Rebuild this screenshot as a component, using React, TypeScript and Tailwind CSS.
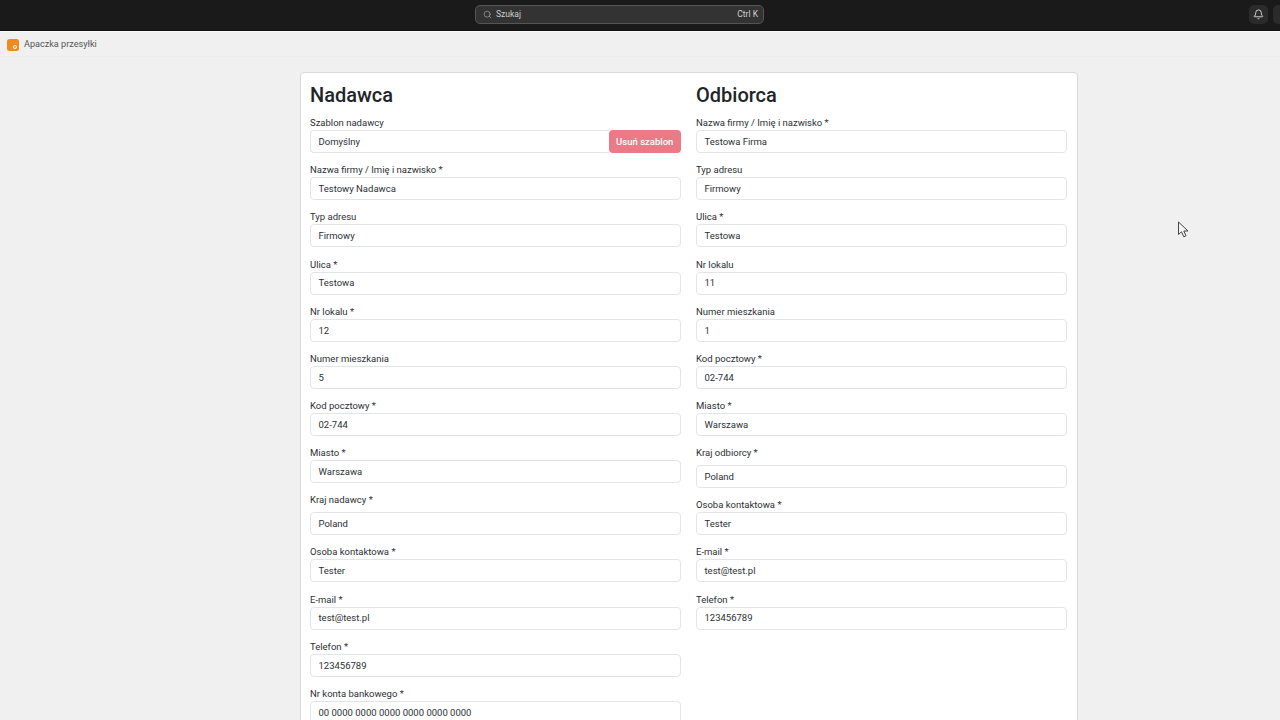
import React from "react";
import { Search, Bell } from "lucide-react";

type F = { label: string; value: string; tall?: boolean };

const left: F[] = [
  { label: "Nazwa firmy / Imię i nazwisko *", value: "Testowy Nadawca" },
  { label: "Typ adresu", value: "Firmowy" },
  { label: "Ulica *", value: "Testowa" },
  { label: "Nr lokalu *", value: "12" },
  { label: "Numer mieszkania", value: "5" },
  { label: "Kod pocztowy *", value: "02-744" },
  { label: "Miasto *", value: "Warszawa" },
  { label: "Kraj nadawcy *", value: "Poland", tall: true },
  { label: "Osoba kontaktowa *", value: "Tester" },
  { label: "E-mail *", value: "test@test.pl" },
  { label: "Telefon *", value: "123456789" },
  { label: "Nr konta bankowego *", value: "00 0000 0000 0000 0000 0000 0000" },
];

const right: F[] = [
  { label: "Nazwa firmy / Imię i nazwisko *", value: "Testowa Firma" },
  { label: "Typ adresu", value: "Firmowy" },
  { label: "Ulica *", value: "Testowa" },
  { label: "Nr lokalu", value: "11" },
  { label: "Numer mieszkania", value: "1" },
  { label: "Kod pocztowy *", value: "02-744" },
  { label: "Miasto *", value: "Warszawa" },
  { label: "Kraj odbiorcy *", value: "Poland", tall: true },
  { label: "Osoba kontaktowa *", value: "Tester" },
  { label: "E-mail *", value: "test@test.pl" },
  { label: "Telefon *", value: "123456789" },
];

function Box({ value, className = "" }: { value: string; className?: string }) {
  return (
    <div className={`h-[23px] flex items-center px-[7.5px] pt-[1px] bg-white border border-[#e2e5e8] rounded-[4px] text-[#2b3035] ${className}`}>
      {value}
    </div>
  );
}

function Field({ label, value, tall }: F) {
  return (
    <div className="mb-[8.17px]">
      <div className={`h-[16px] leading-[18px] text-[#2b3035] ${tall ? "mb-[5px]" : ""}`}>{label}</div>
      <Box value={value} />
    </div>
  );
}

function Column({ title, children }: { title: string; children: React.ReactNode }) {
  return (
    <div className="flex-1 min-w-0">
      <h2 className="text-[20px] leading-[25px] font-medium text-[#212529] mb-[7.05px] pt-[1px] h-[25px]">{title}</h2>
      {children}
    </div>
  );
}

export default function App() {
  return (
    <div className="relative h-[720px] w-[1280px] overflow-hidden bg-[#f0f0f0] text-[9.5px] font-['Roboto','Open_Sans',sans-serif]">
      <header className="h-[31px] bg-[#1a1a1a] border-b border-[#111] flex items-center relative">
        <div className="ml-[475px] w-[289px] h-[19px] rounded-[5px] bg-[#333333] border border-[#555555] flex items-center pl-[7px] pr-[5px] text-[#cfcfcf] text-[8.5px] mt-[-1px]">
          <Search size={9} strokeWidth={1.75} className="text-[#aaaaaa]" />
          <span className="ml-[4px]">Szukaj</span>
          <span className="ml-auto">Ctrl K</span>
        </div>
        <div className="absolute left-[1249px] top-[5px] w-[19px] h-[19px] rounded-[5px] bg-[#2b2b2b] flex items-center justify-center">
          <Bell size={11} strokeWidth={2} className="text-[#dddddd]" />
        </div>
        <div className="absolute left-[1273px] top-[5px] w-[19px] h-[19px] rounded-[5px] bg-[#2b2b2b]" />
      </header>
      <div className="h-[26px] flex items-center pl-[7px] border-t border-b border-t-[#fafafa] border-b-[#ececec] bg-[#f0f0f0]">
        <div className="w-[12px] h-[12px] mt-[1px] rounded-[2.5px] bg-[#f08c1e] flex items-end justify-end pr-[2px] pb-[2px]">
          <div className="w-[4px] h-[4px] rounded-full border border-white" />
        </div>
        <span className="ml-[5px] mt-[1px] text-[9.1px] text-[#555555]">Apaczka przesyłki</span>
      </div>
      <main className="w-[778px] ml-[300px] mt-[15px] bg-white border border-[#d9d9d9] rounded-[4px] pl-[9px] pr-[10px] pt-[9px] flex gap-[15px]">
        <Column title="Nadawca">
          <div className="mb-[8.17px]">
            <div className="h-[16px] leading-[18px] text-[#2b3035]">Szablon nadawcy</div>
            <div className="flex">
              <Box value="Domyślny" className="flex-1 rounded-r-none border-r-0" />
              <div className="h-[23px] w-[72.5px] pt-[1px] flex items-center justify-center rounded-[4px] bg-[#ea7a86] text-white font-medium">
                Usuń szablon
              </div>
            </div>
          </div>
          {left.map((f) => (
            <Field key={f.label} {...f} />
          ))}
        </Column>
        <Column title="Odbiorca">
          {right.map((f) => (
            <Field key={f.label} {...f} />
          ))}
        </Column>
      </main>
      <svg className="absolute left-[1177px] top-[221px]" width="13" height="17" viewBox="0 0 13 17">
        <path d="M1.5 1 V13.5 L4.5 10.8 L6.8 15.8 L9 14.8 L6.8 10 H11 Z" fill="#f4f4f4" stroke="#444" strokeWidth="1" />
      </svg>
    </div>
  );
}
